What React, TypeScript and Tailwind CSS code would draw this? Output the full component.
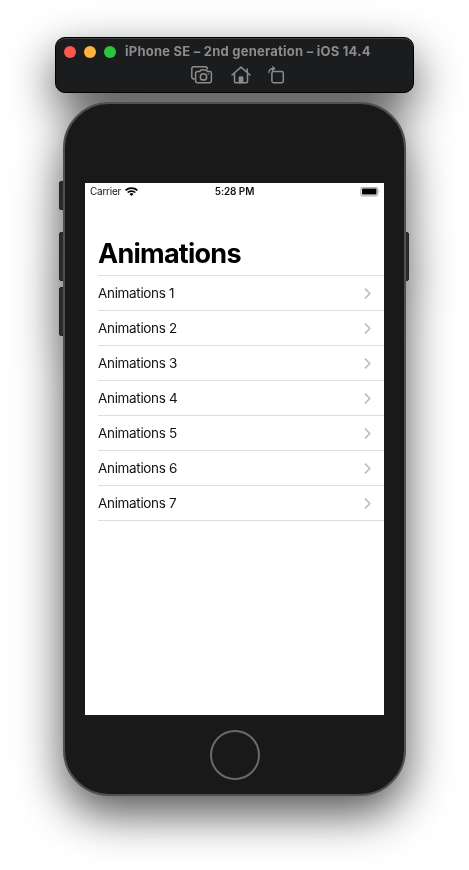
const items = [1, 2, 3, 4, 5, 6, 7].map((n) => `Animations ${n}`);

function ScreenshotIcon() {
  return (
    <svg width="22" height="18" viewBox="0 0 22 18" fill="none" stroke="#8c8c8d" strokeWidth="1.5" strokeLinejoin="round" strokeLinecap="round">
      <path d="M3.300 13H2.700A1.900 1.900 0 0 1 .8 11.100V2.700A1.900 1.900 0 0 1 2.700.8H14.400a1.900 1.900 0 0 1 1.900 1.900" />
      <path d="M6.300 5.600H8.700L9.800 4H15.200L16.300 5.600H18.700a1.700 1.700 0 0 1 1.700 1.700V15a1.700 1.700 0 0 1-1.700 1.700H6.300A1.700 1.700 0 0 1 4.600 15V7.300A1.700 1.700 0 0 1 6.300 5.600Z" />
      <circle cx="12.500" cy="10.900" r="3.200" />
      <circle cx="17.300" cy="8" r=".8" fill="#8c8c8d" stroke="none" />
    </svg>
  );
}

function HomeIcon() {
  return (
    <svg width="20" height="18" viewBox="0 0 20 18" fill="none" stroke="#8c8c8d" strokeWidth="1.500" strokeLinejoin="round" strokeLinecap="round">
      <path d="M1 9 10 1.100l9 7.900M3.500 7.500v8a1.200 1.200 0 0 0 1.200 1.200h10.600a1.200 1.200 0 0 0 1.200-1.200v-8M16.200 2.900v3" />
      <path d="M8 16.500v-5.700h4v5.700Z" fill="#8c8c8d" strokeWidth=".8" />
    </svg>
  );
}

function RotateIcon() {
  return (
    <svg width="17" height="18" viewBox="0 0 17 18" fill="none" stroke="#8c8c8d" strokeWidth="1.500" strokeLinejoin="round" strokeLinecap="round">
      <rect x="3.900" y="5.600" width="11.400" height="11.100" rx="1.600" />
      <path d="M.9 6.600C.9 3.800 2.500 2.500 6 2.500M4.600.8l2 1.700-2 1.800" strokeWidth="1.300" />
    </svg>
  );
}

function WifiIcon() {
  return (
    <svg width="13" height="9" viewBox="0 0 12 9" preserveAspectRatio="none" fill="none" stroke="#000" strokeWidth="1.700">
      <path d="M.6 3.300a7.700 7.700 0 0 1 10.800 0M2.500 5.500a4.900 4.900 0 0 1 7 0" />
      <path d="M6 8.900 4.100 7a2.700 2.700 0 0 1 3.800 0Z" fill="#000" stroke="none" />
    </svg>
  );
}

function BatteryIcon() {
  return (
    <svg width="20" height="10" viewBox="0 0 20 10">
      <rect x=".8" y=".3" width="16.900" height="8.600" rx="2.300" fill="none" stroke="#b0b0b0" strokeWidth="1.200" />
      <rect x="2" y="1.600" width="14.500" height="6" rx="1" fill="#000" />
      <path d="M18.700 3.100c1 .4 1 2.600 0 3Z" fill="#b0b0b0" />
    </svg>
  );
}

function SideButton({ className }: { className: string }) {
  return <div className={`absolute w-[6px] border border-[#242424] bg-[#2b2b2b] ${className}`} />;
}

function Toolbar() {
  return (
    <header className="h-[56px] w-[359px] rounded-[10px] border border-black bg-[#1b1c1e] shadow-[inset_0_1px_0_#414243]">
      <div className="flex h-[27px] items-center pl-2">
        <div className="flex gap-2">
          <span className="size-3 rounded-full bg-[#ff5650]" />
          <span className="size-3 rounded-full bg-[#ffb43c]" />
          <span className="size-3 rounded-full bg-[#29c440]" />
        </div>
        <h1 className="ml-[9px] text-[13px] font-bold tracking-[0.23px] whitespace-nowrap text-[#8c8c8d]">iPhone SE – 2nd generation – iOS 14.4</h1>
      </div>
      <div className="flex items-center pt-px pl-[135px]">
        <ScreenshotIcon />
        <div className="ml-[17.5px]"><HomeIcon /></div>
        <div className="ml-[17.500px]"><RotateIcon /></div>
      </div>
    </header>
  );
}

function Screen() {
  return (
    <main className="h-[532px] w-[299px] bg-white">
      <div className="grid h-[17px] grid-cols-3 items-center text-[10px] text-[#111]">
        <div className="flex items-center gap-1 pl-[5px]"><span className="tracking-[-0.25px]">Carrier</span><WifiIcon /></div>
        <span className="text-center font-semibold tracking-[-0.1px]">5:28 PM</span>
        <div className="flex justify-end pr-1"><BatteryIcon /></div>
      </div>
      <h2 className="mt-[37px] ml-[13px] h-[38px] text-[27px] leading-[34px] font-bold tracking-[-0.75px] text-black">Animations</h2>
      <ul className="ml-[13px] border-t border-[#dedede]">
        {items.map((item) => (
          <li key={item} className="flex h-[35px] items-center justify-between border-b border-[#dedede] pr-[13px] text-[13.5px] tracking-[-0.33px] text-[#111]">
            <span>{item}</span>
            <svg width="7" height="11" viewBox="0 0 7 11" fill="none" stroke="#bdbdc0" strokeWidth="1.700" strokeLinecap="round" strokeLinejoin="round"><path d="m1.500 1.200 4.300 4.300-4.300 4.300" /></svg>
          </li>
        ))}
      </ul>
    </main>
  );
}

export default function App() {
  return (
    <div className="h-[870px] w-[469px] overflow-hidden bg-white font-['Inter','Liberation_Sans',sans-serif]">
      <div className="flex h-[870px] flex-col items-center gap-[9px] pt-[37px] drop-shadow-[0_18px_23px_rgba(0,0,0,0.67)]">
        <Toolbar />
        <div className="relative">
          <SideButton className="top-[79px] -left-[4px] h-[29px] rounded-l-[2px]" />
          <SideButton className="top-[130px] -left-[4px] h-[49px] rounded-l-[2px]" />
          <SideButton className="top-[185px] -left-[4px] h-[49px] rounded-l-[2px]" />
          <SideButton className="top-[130px] -right-[3px] h-[49px] rounded-r-[2px]" />
          <div className="relative flex h-[694px] w-[343px] flex-col items-center rounded-[46px] border-2 border-[#505050] bg-[#191919] pt-[79px]">
            <Screen />
            <div className="mt-[14.500px] size-[50px] rounded-full border-2 border-[#6a6a6a]" />
          </div>
        </div>
      </div>
    </div>
  );
}
